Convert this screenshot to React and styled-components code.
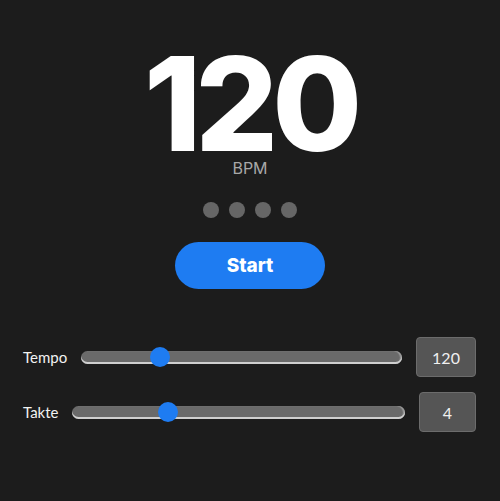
import React from 'react'
import styled, { createGlobalStyle } from 'styled-components'

const GlobalStyle = createGlobalStyle`
  html, body {
    margin: 0;
    padding: 0;
    background: #1c1c1c;
  }
  body {
    font-family: 'Lato', 'Liberation Sans', sans-serif;
    color: #fff;
  }
`

const StyledMetronome = styled.main`
  width: 500px;
  height: 501px;
  box-sizing: border-box;
  padding-top: 50px;
  display: flex;
  flex-direction: column;
  align-items: center;
  background: #1c1c1c;
`

const BigTempo = styled.h1`
  margin: 0;
  font-family: 'Inter', 'Liberation Sans', sans-serif;
  font-weight: 800;
  font-size: 130px;
  line-height: 108px;
  letter-spacing: -6px;
  color: #fff;
`

const Unit = styled.span`
  font-family: 'Inter', 'Liberation Sans', sans-serif;
  font-size: 16px;
  line-height: 20px;
  color: #a8a8a8;
`

const Beats = styled.div`
  display: flex;
  gap: 10px;
  margin-top: 24px;
`

const Beat = styled.span`
  width: 16px;
  height: 16px;
  border-radius: 50%;
  background: ${({ $active }) => ($active ? '#1e7cf2' : '#666')};
`

const StartButton = styled.button`
  margin-top: 24px;
  width: 150px;
  height: 47px;
  border: none;
  border-radius: 24px;
  background: #1e7cf2;
  color: #fff;
  font-family: 'Inter', 'Liberation Sans', sans-serif;
  font-weight: 800;
  font-size: 19px;
  cursor: pointer;
`

const Controls = styled.section`
  align-self: stretch;
  margin-top: 48px;
  padding: 0 24px 0 23px;
  display: flex;
  flex-direction: column;
  gap: 15px;
`

const Row = styled.div`
  display: flex;
  align-items: center;
  gap: 14px;
  height: 40px;
`

const Label = styled.label`
  font-size: 15px;
  color: #f2f2f2;
`

const Slider = styled.input`
  flex: 1;
  min-width: 0;
  margin: 0;
  height: 20px;
  background: transparent;
  -webkit-appearance: none;
  appearance: none;

  &::-webkit-slider-runnable-track {
    height: 13px;
    border-radius: 7px;
    background: #6a6a6a;
    box-shadow: inset 0 -2px 0 #cfcfcf, inset -2px 0 1px #9a9a9a;
  }

  &::-webkit-slider-thumb {
    -webkit-appearance: none;
    width: 20px;
    height: 20px;
    margin-top: -4px;
    border-radius: 50%;
    border: none;
    background: #1e7cf2;
  }
`

const ValueBox = styled.div`
  width: ${({ $width }) => $width}px;
  height: 40px;
  box-sizing: border-box;
  display: flex;
  align-items: center;
  justify-content: center;
  border: 1px solid #6c6c6c;
  border-radius: 4px;
  background: #555;
  font-size: 16px;
  color: #f0f0f0;
`

const controls = [
  { label: 'Tempo', min: 40, max: 390, value: 120, box: 60 },
  { label: 'Takte', min: 1, max: 12, value: 4, box: 57 },
]

const App = () => {
  return (
    <StyledMetronome>
      <GlobalStyle />
      <BigTempo>120</BigTempo>
      <Unit>BPM</Unit>

      <Beats>
        {[0, 1, 2, 3].map((i) => (
          <Beat key={i} />
        ))}
      </Beats>

      <StartButton>Start</StartButton>

      <Controls>
        {controls.map((c) => (
          <Row key={c.label}>
            <Label>{c.label}</Label>
            <Slider type='range' min={c.min} max={c.max} defaultValue={c.value} />
            <ValueBox $width={c.box}>{c.value}</ValueBox>
          </Row>
        ))}
      </Controls>
    </StyledMetronome>
  )
}

export default App
